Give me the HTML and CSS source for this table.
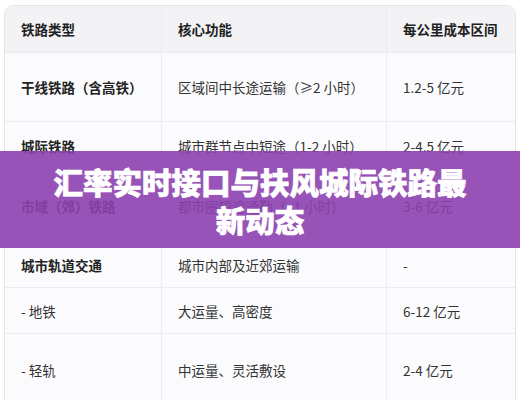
FILE: index.html
```html
<!DOCTYPE html>
<html lang="zh">
<head>
<meta charset="utf-8">
<link rel="stylesheet" href="styles.css">
</head>
<body>
<div class="page">
  <div class="table">
    <div class="cell head">铁路类型</div>
    <div class="cell head">核心功能</div>
    <div class="cell head last">每公里成本区间</div>

    <div class="cell bold">干线铁路（含高铁）</div>
    <div class="cell">区域间中长途运输（≥2 小时）</div>
    <div class="cell last">1.2-5 亿元</div>

    <div class="cell bold">城际铁路</div>
    <div class="cell">城市群节点中短途（1-2 小时）</div>
    <div class="cell last">2-4.5 亿元</div>

    <div class="cell bold">市域（郊）铁路</div>
    <div class="cell">都市圈短途通勤（&lt;1 小时）</div>
    <div class="cell last">3-6 亿元</div>

    <div class="cell bold">城市轨道交通</div>
    <div class="cell">城市内部及近郊运输</div>
    <div class="cell last">-</div>

    <div class="cell">- 地铁</div>
    <div class="cell">大运量、高密度</div>
    <div class="cell last">6-12 亿元</div>

    <div class="cell">- 轻轨</div>
    <div class="cell">中运量、灵活敷设</div>
    <div class="cell last">2-4 亿元</div>
  </div>
  <div class="banner">
    <h1 class="banner-title">汇率实时接口与扶风城际铁路最新动态</h1>
  </div>
</div>
</body>
</html>
```
FILE: styles.css
```css
html, body {
  margin: 0;
  padding: 0;
  background: #ffffff;
}
body {
  width: 520px;
  height: 400px;
  overflow: hidden;
  font-family: "Noto Sans CJK SC", "Noto Sans", sans-serif;
}
.page {
  position: relative;
  width: 520px;
  height: 400px;
  padding: 5px 4px 0 4px;
  box-sizing: border-box;
}
.table {
  display: grid;
  grid-template-columns: 157px 225px 1fr;
  grid-template-rows: 47px 69px 48px 72px 46px 46px 72px;
  border: 1px solid #e6e6ea;
  border-radius: 9px;
  overflow: hidden;
  background: #fbfbfd;
}
.cell {
  display: flex;
  align-items: center;
  padding: 0 16px;
  font-size: 13.5px;
  color: #333;
  border-right: 1px solid #ececf0;
  border-bottom: 1px solid #ececf0;
  white-space: nowrap;
}
.cell.last {
  border-right: none;
}
.head {
  background: #f3f3f5;
  font-weight: 700;
  color: #222;
  font-size: 13.5px;
}
.bold {
  font-weight: 700;
  color: #222;
}
.banner {
  position: absolute;
  left: 0;
  top: 151px;
  width: 520px;
  height: 97px;
  background: rgba(140, 64, 175, 0.9);
  display: flex;
  align-items: center;
  justify-content: center;
  padding: 0 46px;
  box-sizing: border-box;
}
.banner-title {
  margin: 0;
  color: #ffffff;
  font-size: 29.5px;
  line-height: 38px;
  font-weight: 900;
  text-align: center;
  -webkit-text-stroke: 0.7px #ffffff;
}
```
